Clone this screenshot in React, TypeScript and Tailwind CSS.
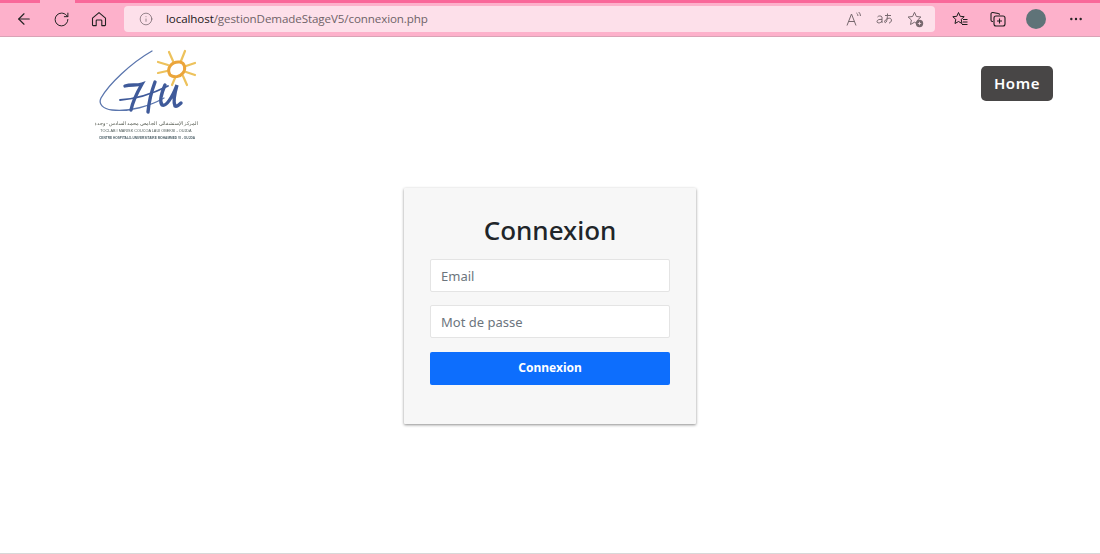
import { ArrowLeft, RotateCw, Info, MoreHorizontal } from "lucide-react";

function HomeIcon() {
  return (
    <svg width="16" height="16" viewBox="0 0 16 16" fill="none" stroke="#222" strokeWidth="1.1" strokeLinejoin="round">
      <path d="M1.5 7.2 8 1.6l6.500 5.600V14a.6.6 0 0 1-.6.6h-3.100V9.800a.8.8 0 0 0-.8-.8H6a.8.8 0 0 0-.8.8v4.800H2.100a.6.600 0 0 1-.6-.6z" />
    </svg>
  );
}

function ReadAloud() {
  return (
    <svg width="16" height="16" viewBox="0 0 16 16" fill="none" stroke="#77686e" strokeWidth="1">
      <path d="M1 14.500 5.500 3l4.500 11.500M2.600 10.500h5.800" />
      <path d="M10.500 2c1 .8 1.400 1.800 1.400 3M12.600 1c1.300 1.100 1.800 2.400 1.800 4" />
    </svg>
  );
}

function Translate() {
  return (
    <svg width="17" height="14" viewBox="0 0 17 14" fill="none" stroke="#77686e" strokeWidth="1">
      <path d="M1.500 5c.5-1.200 4-1.600 4.500 0v6M6 7.500C3 7 1 8 1 9.600c0 1.800 3.500 2 5-.6" />
      <path d="M9 3.500h6M11.500 1.500c0 4-.5 7-1.300 8.500-.8 1.200-2 .5-1.500-.8.600-1.600 3-3.200 5-3 2.300.2 2.600 3.800-.7 5" />
    </svg>
  );
}

function FavAdd() {
  return (
    <svg width="17" height="17" viewBox="0 0 17 17" fill="none">
      <path d="M7.500 1.300 9.400 5.500l4.500.5-3.300 3 .9 4.500-4-2.300-4 2.300.9-4.500-3.300-3 4.500-.5z" stroke="#77686e" strokeWidth="1" strokeLinejoin="round" />
      <circle cx="12.500" cy="12.500" r="3.700" fill="#77686e" />
      <path d="M12.500 10.800v3.400M10.800 12.500h3.400" stroke="#fde0ea" strokeWidth="0.8" />
    </svg>
  );
}

function Favorites() {
  return (
    <svg width="16" height="16" viewBox="0 0 16 16" fill="none" stroke="#1c1c1c" strokeWidth="1" strokeLinejoin="round">
      <path d="M6.500 1.500 8.200 5.300l4 .4-3 2.700.8 4.100-3.500-2-3.500 2 .8-4.100-3-2.700 4-.4z" />
      <path d="M11 8.500h4.500M11 11h4.500M10 13.500h5.500" />
    </svg>
  );
}

function Collections() {
  return (
    <svg width="16" height="16" viewBox="0 0 16 16" fill="none" stroke="#1c1c1c" strokeWidth="1.100" strokeLinejoin="round">
      <path d="M3 10.500H2.500A1.500 1.500 0 0 1 1 9V3a1.500 1.500 0 0 1 1.800-1.500l5.500 1c.7.100 1.200.6 1.200 1.300" />
      <rect x="4" y="5" width="11" height="10" rx="2" />
      <path d="M9.500 7.500v5M7 10h5" />
    </svg>
  );
}

function Logo() {
  return (
    <svg width="105" height="96" viewBox="0 0 105 96" fill="none" className="blur-[0.4px]">
      {/* sun rays */}
      <g stroke="#edc25c" strokeWidth="2.200" strokeLinecap="round">
        <path d="M74 4l4 9" />
        <path d="M90 3l-4 10" />
        <path d="M100 15l-9 3" />
        <path d="M100 27l-9-3" />
        <path d="M92 37l-4-9" />
        <path d="M77 37l3-7" />
        <path d="M63 14l10 3" />
        <path d="M63 25l9-2" />
      </g>
      {/* sun ring */}
      <path d="M75 27c-4-7 2-14 10-13 5 1 6 7 3 11-3 4-9 5-13 2z" stroke="#eba53a" strokeWidth="3" />
      {/* swoosh */}
      <path d="M57 3C36 15 14 36 6 50c-3 6 2 11 11 12 18 2 38-4 52-12" stroke="#5a75ad" strokeWidth="1.300" strokeLinecap="round" />
      {/* script letters */}
      <g stroke="#3f5a9a" strokeLinecap="round" fill="none">
        <path d="M30 38c6-2 11 0 17-2-4 7-9 16-11 26" strokeWidth="3.400" />
        <path d="M25 52c16-1 32-6 48-14" strokeWidth="1.800" />
        <path d="M60 34c-3 8-6 19-7 30" strokeWidth="3.400" />
        <path d="M70 37c-3 7-6 16-3 20 4 2 10-7 15-20-2 7-4 17-2 21 2 1 4-1 6-3" strokeWidth="3.400" />
      </g>
      {/* tiny caption lines */}
      <text x="51" y="77" textAnchor="middle" fontSize="4.600" fill="#555a50" fontFamily="'Noto Sans', sans-serif">
        المركز الإستشفائي الجامعي محمد السادس - وجدة
      </text>
      <text x="51" y="84" textAnchor="middle" fontSize="3.800" fill="#4d5a58" fontFamily="'Liberation Sans', sans-serif">
        TOCLAB I MARISK COUCOA LAUI OBEKSI - OUJDA
      </text>
      <text x="52" y="91" textAnchor="middle" fontSize="3.200" fontWeight="700" fill="#4d6068" fontFamily="'Liberation Sans', sans-serif">
        CENTRE HOSPITALO-UNIVERSITAIRE MOHAMMED VI - OUJDA
      </text>
    </svg>
  );
}

export default function App() {
  return (
    <div className="h-[554px] overflow-hidden bg-white flex flex-col font-['Noto_Sans',sans-serif]">
      {/* browser chrome */}
      <div className="h-[37px] shrink-0 bg-[#fdb1cb] border-b border-[#d9a3b6]">
        <div className="h-[3px] bg-[#f9689a] pl-[40px]">
          <div className="h-[3px] w-[35px] bg-[#fdb1cb]"></div>
        </div>
        <div className="flex items-center h-[33px] pl-[15px] pr-[16px] pb-[1px]">
          <ArrowLeft size={18} strokeWidth={1.5} color="#222" />
          <RotateCw size={17} strokeWidth={1.4} color="#222" className="ml-[20px]" />
          <div className="ml-[21px]"><HomeIcon /></div>
          <div className="ml-[17px] w-[811px] h-[26px] bg-[#fde0ea] rounded-[4px] flex items-center pl-[15px] pr-[11px]">
            <Info size={14} strokeWidth={1.1} color="#5e5257" />
            <span className="ml-[13px] text-[11.6px] font-['Open_Sans',sans-serif] tracking-[-0.1px] text-[#1d1a1b]">
              localhost<span className="text-[#6f6368]">/gestionDemadeStageV5/connexion.php</span>
            </span>
            <div className="ml-auto flex items-center gap-[14px]">
              <ReadAloud />
              <Translate />
              <FavAdd />
            </div>
          </div>
          <div className="ml-[17px]"><Favorites /></div>
          <div className="ml-[22px]"><Collections /></div>
          <div className="ml-[20px] w-5 h-5 rounded-full bg-[#5f7378]"></div>
          <MoreHorizontal size={16} strokeWidth={1.6} color="#222" className="ml-[22px]" />
        </div>
      </div>

      {/* page */}
      <div className="flex-1 flex flex-col border-b border-[#d8d8d8]">
        <header className="flex justify-between items-start pl-[95px] pr-[47px]">
          <div className="pt-[11px]"><Logo /></div>
          <a className="mt-[29px] w-[72px] h-[35px] bg-[#484646] rounded-[5px] text-white text-[15px] font-semibold tracking-[0.6px] flex items-center justify-center">
            Home
          </a>
        </header>

        <form className="mt-[44px] mx-auto w-[292px] h-[236px] bg-[#f7f7f7] rounded-[1px] shadow-[0_1px_3px_rgba(0,0,0,0.45)] px-[26px] pt-[23px]">
          <h1 className="text-[26px] leading-[38px] font-medium text-[#212529] text-center">Connexion</h1>
          <div className="mt-[10px] h-[33px] bg-white border border-[#e4e4e4] rounded-[2px] px-[10px] pt-[2px] flex items-center text-[13px] text-[#6c757d]">Email</div>
          <div className="mt-[13px] h-[33px] bg-white border border-[#e4e4e4] rounded-[2px] px-[10px] pt-[2px] flex items-center text-[13px] text-[#6c757d]">Mot de passe</div>
          <button type="button" className="mt-[14px] w-full h-[33px] bg-[#0d6efd] rounded-[2px] text-white text-[12px] font-bold pb-[1px]">Connexion</button>
        </form>
      </div>
    </div>
  );
}
